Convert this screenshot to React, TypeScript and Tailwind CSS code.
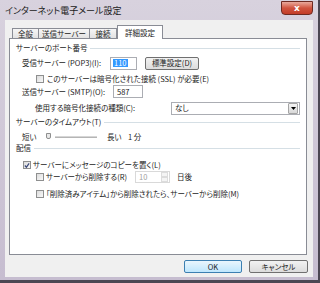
import React from 'react'

const FONT = "font-['Meiryo_UI','Noto_Sans_CJK_JP',sans-serif] [font-feature-settings:'palt']"

function Box({ checked }: { checked?: boolean }) {
  return (
    <span className="w-[8px] h-[8px] shrink-0 border border-[#8e8f8f] bg-gradient-to-br from-[#dcdcdc] to-[#f8f8f8] flex items-center justify-center">
      {checked && (
        <svg width="7" height="7" viewBox="0 0 7 7">
          <path d="M1 3.5 L2.8 5.5 L6 1" stroke="#3c4a7a" strokeWidth="1.4" fill="none" />
        </svg>
      )}
    </span>
  )
}

function Section({ label }: { label: string }) {
  return (
    <div className="h-[12px] flex items-center gap-[3px]">
      <span className="text-[#222] leading-none whitespace-nowrap">{label}</span>
      <span className="flex-1 h-px bg-[#d5dfe5]" />
    </div>
  )
}

function Btn({ label, primary, w }: { label: string; primary?: boolean; w: string }) {
  return (
    <div
      className={`${w} h-[13px] rounded-[2px] border flex items-center justify-center leading-none text-[#222] ${
        primary
          ? 'border-[#3c7fb1] bg-gradient-to-b from-[#eaf6fd] to-[#bee6fd]'
          : 'border-[#707070] bg-gradient-to-b from-[#f2f2f2] to-[#dcdcdc]'
      }`}
    >
      {label}
    </div>
  )
}

export default function App() {
  return (
    <div className={`w-[320px] h-[283px] bg-[#4b4652] overflow-hidden ${FONT} text-[7.5px] text-[#1a1a1a]`}>
      <div className="w-[318px] h-[280px] bg-gradient-to-b from-[#d8d2de] to-[#c6bdd0] flex flex-col px-[5px] pb-[3px]">
        {/* title bar */}
        <div className="h-[20px] flex items-start justify-between">
          <span className="text-[9px] text-[#1a1a1a] leading-none mt-[6px] whitespace-nowrap">
            インターネット電子メール設定
          </span>
          <div className="w-[32px] h-[14px] mt-[1px] rounded-b-[4px] border border-[#6e2a22] bg-gradient-to-b from-[#e8a89c] via-[#d0533f] to-[#c33d28] flex items-center justify-center">
            <span className="text-white text-[9px] font-bold leading-none font-['DejaVu_Sans',sans-serif]">x</span>
          </div>
        </div>

        {/* client area */}
        <div className="flex-1 bg-[#f0f0f0] flex flex-col">
          {/* tabs */}
          <div className="mt-[5px] h-[13px] pl-[7px] flex items-end relative z-10">
            <div className="w-[27px] h-[10px] border border-b-0 border-[#898c95] bg-gradient-to-b from-[#f6f6f6] to-[#e2e2e2] flex items-center justify-center leading-none">
              全般
            </div>
            <div className="w-[51px] h-[10px] border border-b-0 border-l-0 border-[#898c95] bg-gradient-to-b from-[#f6f6f6] to-[#e2e2e2] flex items-center justify-center leading-none whitespace-nowrap">
              送信サーバー
            </div>
            <div className="w-[27px] h-[10px] border border-b-0 border-l-0 border-[#898c95] bg-gradient-to-b from-[#f6f6f6] to-[#e2e2e2] flex items-center justify-center leading-none">
              接続
            </div>
            <div className="w-[46px] h-[14px] -mb-px border border-b-0 border-[#898c95] bg-white flex items-center justify-center leading-none whitespace-nowrap">
              詳細設定
            </div>
          </div>

          {/* panel */}
          <div className="ml-[4px] w-[298px] h-[217px] border border-[#898c95] bg-white px-[6px] pt-[3px] flex flex-col">
            <Section label="サーバーのポート番号" />

            <div className="mt-[2px] h-[14px] pl-[6px] flex items-center">
              <span className="w-[88px] whitespace-nowrap leading-none">受信サーバー (POP3)(I):</span>
              <div className="w-[27px] h-[13px] border border-[#abadb3] flex items-center pl-[2px]">
                <span className="bg-[#3399ff] text-white leading-none px-px">110</span>
              </div>
              <div className="ml-[8px]">
                <Btn label="標準設定(D)" w="w-[54px]" />
              </div>
            </div>

            <div className="mt-[3px] h-[12px] pl-[20px] flex items-center gap-[3px]">
              <Box />
              <span className="whitespace-nowrap leading-none">このサーバーは暗号化された接続 (SSL) が必要(E)</span>
            </div>

            <div className="h-[13px] pl-[6px] flex items-center">
              <span className="w-[91px] whitespace-nowrap leading-none">送信サーバー (SMTP)(O):</span>
              <div className="w-[30px] h-[13px] border border-[#abadb3] flex items-center pl-[3px] leading-none">587</div>
            </div>

            <div className="mt-[3px] h-[14px] pl-[19px] flex items-center">
              <span className="w-[136px] whitespace-nowrap leading-none">使用する暗号化接続の種類(C):</span>
              <div className="w-[129px] h-[13px] border border-[#abadb3] flex items-center justify-between">
                <span className="pl-[3px] leading-none">なし</span>
                <span className="w-[10px] h-[11px] mr-px border border-[#a5a5a5] rounded-[1px] bg-gradient-to-b from-[#f4f4f4] to-[#d8d8d8] flex items-center justify-center">
                  <svg width="5" height="3" viewBox="0 0 5 3">
                    <path d="M0 0 H5 L2.5 3 Z" fill="#000" />
                  </svg>
                </span>
              </div>
            </div>

            <div className="mt-[1px]">
              <Section label="サーバーのタイムアウト(T)" />
            </div>

            <div className="mt-[4px] h-[10px] pl-[6px] flex items-center">
              <span className="w-[23px] leading-none">短い</span>
              <div className="w-[52px] h-[10px] flex items-center gap-[4px]">
                <div className="w-[6px] h-[8px] flex flex-col items-center">
                  <span className="w-[5px] h-[6px] border border-[#8e8f8f] bg-[#e8e8e8] rounded-b-[2px]" />
                </div>
                <span className="flex-1 h-[2px] bg-[#d6d6d6] border-b border-[#b5b5b5]" />
              </div>
              <span className="ml-[10px] w-[21px] leading-none">長い</span>
              <span className="leading-none">1 分</span>
            </div>

            <Section label="配信" />

            <div className="mt-[5px] h-[12px] pl-[7px] flex items-center gap-[2px]">
              <Box checked />
              <span className="whitespace-nowrap leading-none">サーバーにメッセージのコピーを置く(L)</span>
            </div>

            <div className="h-[12px] pl-[20px] flex items-center">
              <Box />
              <span className="ml-[2px] w-[89px] whitespace-nowrap leading-none">サーバーから削除する(R)</span>
              <div className="w-[35px] h-[12px] border border-[#d9d9d9] flex items-center justify-between">
                <span className="pl-[3px] leading-none text-[#a0a0a0]">10</span>
                <span className="w-[7px] h-[10px] mr-px flex flex-col">
                  <span className="flex-1 border border-[#dcdcdc] bg-[#f4f4f4]" />
                  <span className="flex-1 border border-[#dcdcdc] bg-[#f4f4f4]" />
                </span>
              </div>
              <span className="ml-[7px] leading-none">日後</span>
            </div>

            <div className="mt-[5px] h-[12px] pl-[20px] flex items-center gap-[2px]">
              <Box />
              <span className="whitespace-nowrap leading-none">「削除済みアイテム」から削除されたら、サーバーから削除(M)</span>
            </div>
          </div>

          {/* buttons */}
          <div className="mt-[5px] pr-[5px] flex justify-end gap-[7px]">
            <Btn label="OK" primary w="w-[58px]" />
            <Btn label="キャンセル" w="w-[59px]" />
          </div>
        </div>
      </div>
    </div>
  )
}
